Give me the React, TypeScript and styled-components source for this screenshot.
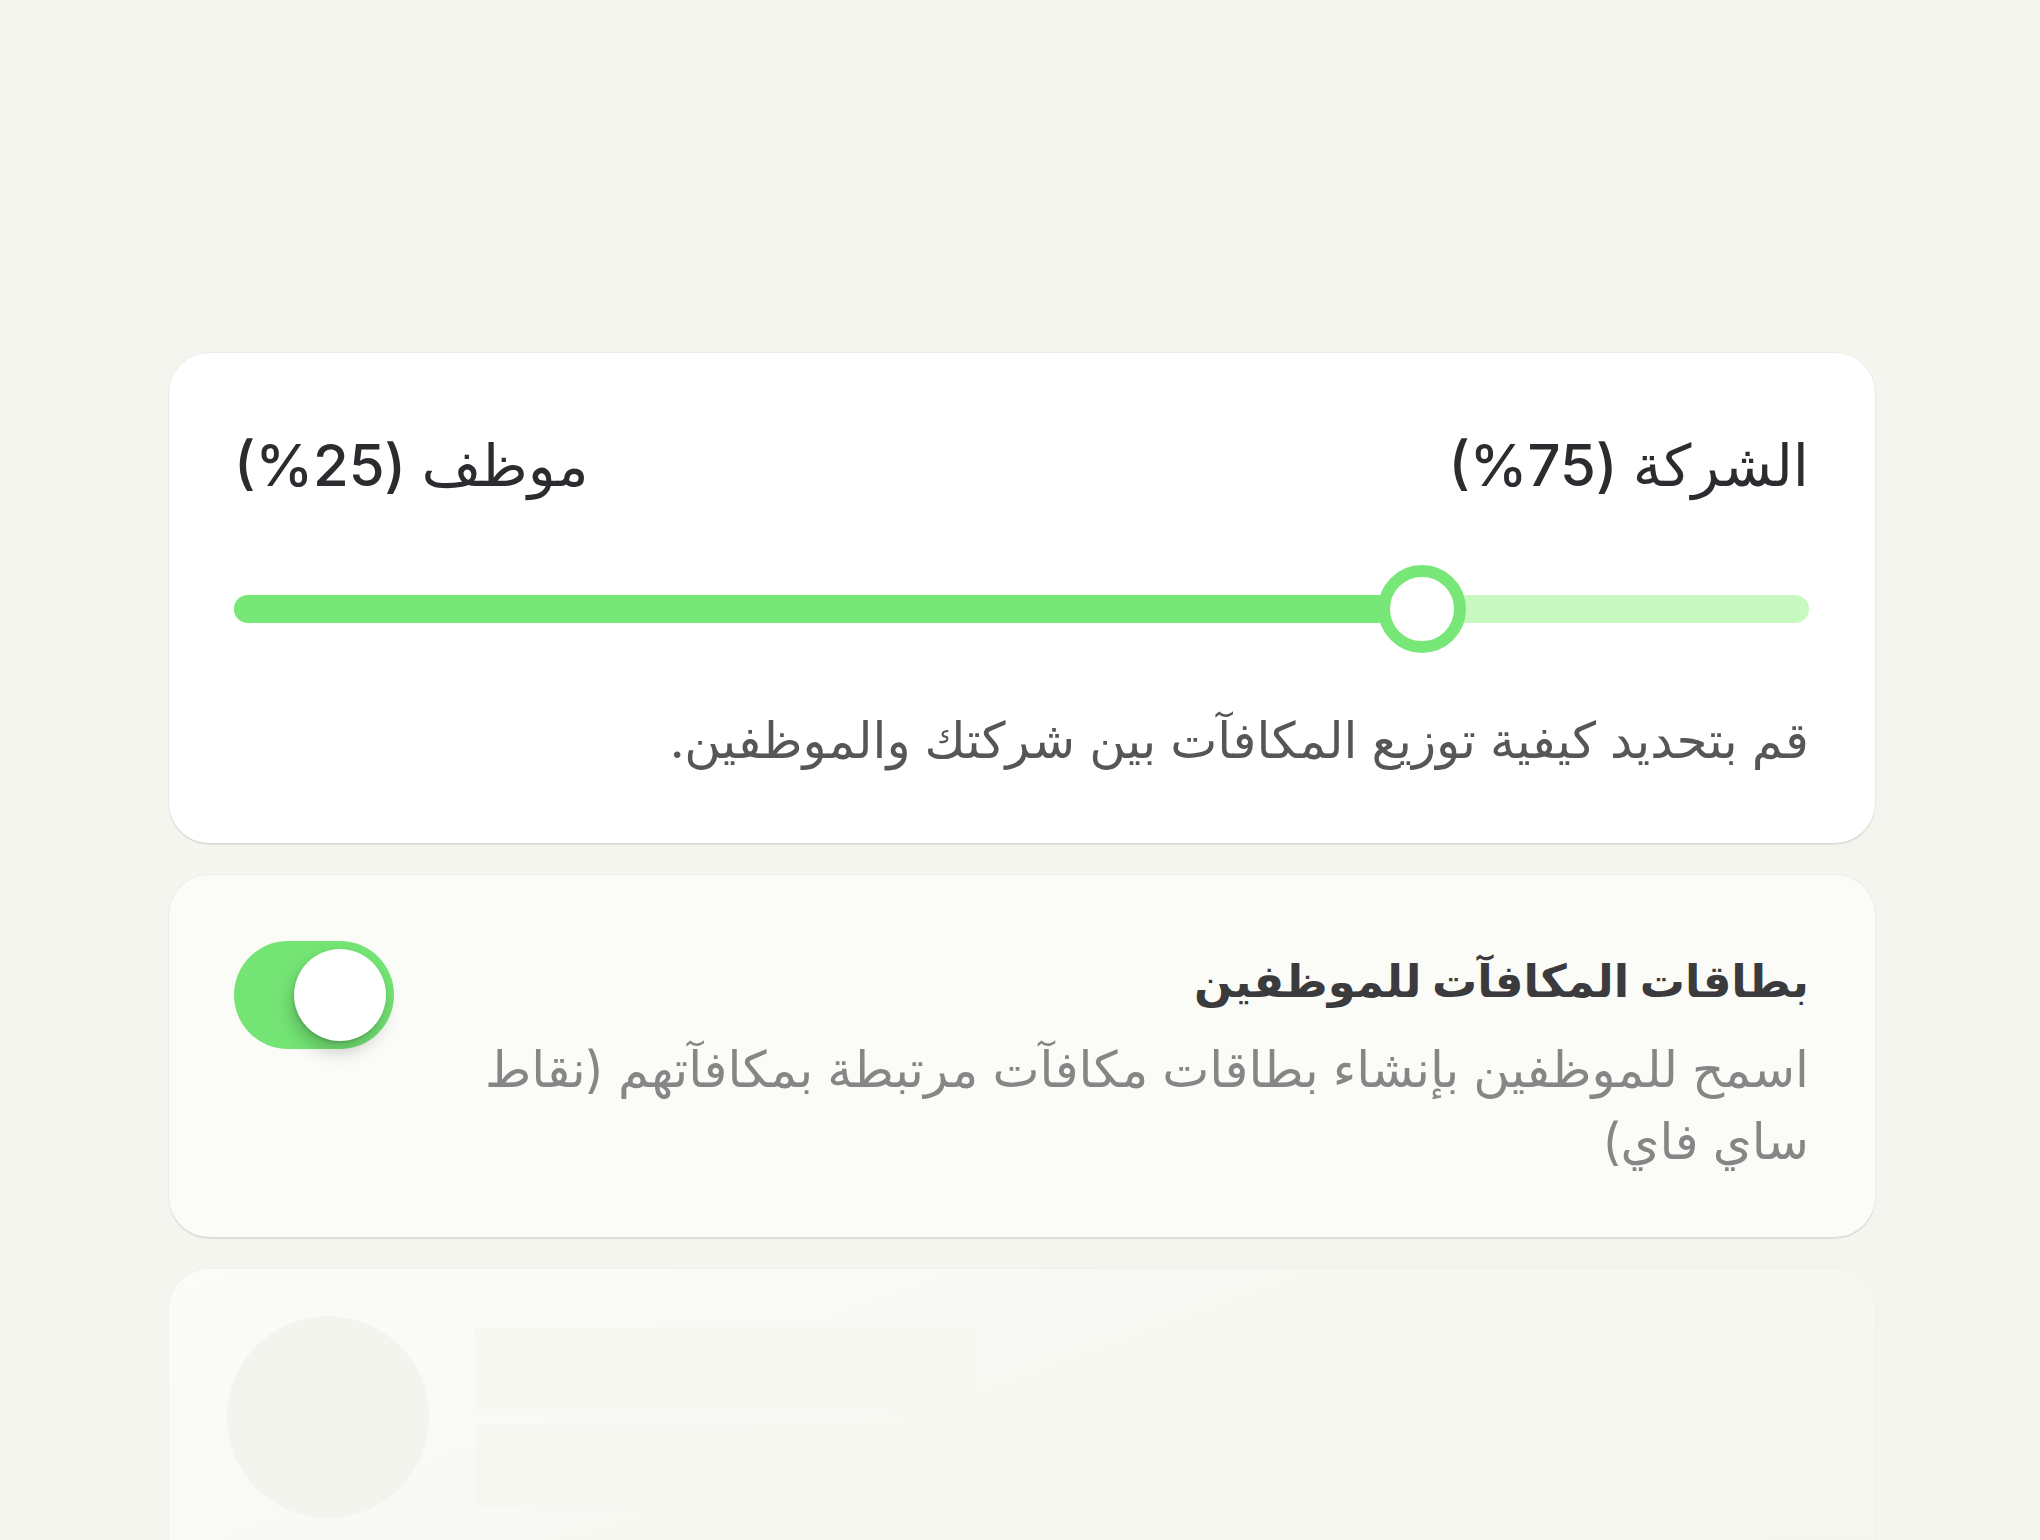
import React from "react";
import styled, { createGlobalStyle } from "styled-components";

const Global = createGlobalStyle`
  html, body { margin: 0; padding: 0; background: #f5f5ef; }
  body { font-family: Inter, "DejaVu Sans", sans-serif; }
`;

const Page = styled.div`
  box-sizing: border-box;
  padding: 353px 165px 0 169px;
  display: flex;
  flex-direction: column;
  gap: 32px;
  overflow: hidden;
  height: 1540px;
`;

const Card = styled.section<{ $tone?: "white" | "soft" }>`
  box-sizing: border-box;
  border-radius: 40px;
  background: ${(p) => (p.$tone === "soft" ? "#fbfbf8" : "#ffffff")};
  box-shadow: 0 2px 1px rgba(0, 0, 0, 0.08), 0 0 0 1px rgba(0, 0, 0, 0.03);
  direction: rtl;
`;

const SplitCard = styled(Card)`
  padding: 64px 66px 63px 65px;
  display: flex;
  flex-direction: column;
`;

const Header = styled.div`
  display: flex;
  justify-content: space-between;
  align-items: center;
  height: 96px;
`;

const Share = styled.span`
  font-size: 58px;
  font-weight: 500;
  color: #2b2b30;
  line-height: 96px;
`;

const SliderWrap = styled.div`
  direction: ltr;
  height: 88px;
  margin-top: 52px;
  display: flex;
  align-items: center;
`;

const Track = styled.div`
  position: relative;
  width: 100%;
  height: 28px;
  border-radius: 14px;
  background: #c8f9c0;
`;

const Fill = styled.div`
  position: absolute;
  left: 0;
  top: 0;
  bottom: 0;
  border-radius: 14px 0 0 14px;
  background: #77e878;
`;

const Thumb = styled.div`
  position: absolute;
  top: 50%;
  width: 88px;
  height: 88px;
  box-sizing: border-box;
  border-radius: 50%;
  border: 12px solid #77e878;
  background: #ffffff;
  transform: translate(-50%, -50%);
`;

const Desc = styled.p<{ $muted?: boolean }>`
  margin: 0;
  font-size: 50px;
  line-height: ${(p) => (p.$muted ? "72px" : "80px")};
  color: ${(p) => (p.$muted ? "#868686" : "#565656")};
`;

const SplitDesc = styled(Desc)`
  margin-top: 47px;
`;

const ToggleCard = styled(Card)`
  padding: 64px 66px 60px 65px;
  display: flex;
  align-items: flex-start;
  gap: 80px;
`;

const TextCol = styled.div`
  flex: 1;
  display: flex;
  flex-direction: column;
  gap: 10px;
`;

const ToggleTitle = styled.h3`
  margin: 0;
  font-size: 45px;
  font-weight: 700;
  line-height: 84px;
  color: #3b3b3d;
`;

const Toggle = styled.div<{ $on: boolean }>`
  flex: none;
  margin-top: 2px;
  width: 160px;
  height: 108px;
  border-radius: 54px;
  background: ${(p) => (p.$on ? "#74e574" : "#dddddd")};
  direction: ltr;
  display: flex;
  align-items: center;
  justify-content: ${(p) => (p.$on ? "flex-end" : "flex-start")};
  padding: 0 8px;
  box-sizing: border-box;
`;

const Knob = styled.div`
  width: 92px;
  height: 92px;
  border-radius: 50%;
  background: #ffffff;
  box-shadow: -2px 10px 18px rgba(0, 0, 0, 0.22), -1px 2px 3px rgba(0, 0, 0, 0.12);
`;

const GhostCard = styled.section`
  box-sizing: border-box;
  flex: none;
  height: 320px;
  border-radius: 40px;
  background: linear-gradient(160deg, #fbfcf9 0%, #f8f8f3 45%, #f6f6f0 100%);
  box-shadow: 0 0 0 1px rgba(0, 0, 0, 0.015);
  padding: 47px 58px;
  display: flex;
  align-items: flex-start;
  gap: 46px;
`;

const GhostCircle = styled.div`
  flex: none;
  width: 202px;
  height: 202px;
  border-radius: 50%;
  background: #f4f4ee;
`;

const GhostLines = styled.div`
  display: flex;
  flex-direction: column;
  gap: 16px;
  padding-top: 11px;
`;

const GhostBar = styled.div<{ $w: number }>`
  width: ${(p) => p.$w}px;
  height: 82px;
  background: #f7f7f2;
`;

export default function App() {
  const value = 75.4;
  return (
    <>
      <Global />
      <Page>
        <SplitCard>
          <Header>
            <Share>الشركة (75%)</Share>
            <Share>موظف (25%)</Share>
          </Header>
          <SliderWrap>
            <Track>
              <Fill style={{ width: `${value}%` }} />
              <Thumb style={{ left: `${value}%` }} />
            </Track>
          </SliderWrap>
          <SplitDesc>قم بتحديد كيفية توزيع المكافآت بين شركتك والموظفين.</SplitDesc>
        </SplitCard>

        <ToggleCard $tone="soft">
          <TextCol>
            <ToggleTitle>بطاقات المكافآت للموظفين</ToggleTitle>
            <Desc $muted>
              اسمح للموظفين بإنشاء بطاقات مكافآت مرتبطة بمكافآتهم (نقاط ساي فاي)
            </Desc>
          </TextCol>
          <Toggle $on>
            <Knob />
          </Toggle>
        </ToggleCard>

        <GhostCard>
          <GhostCircle />
          <GhostLines>
            <GhostBar $w={500} />
            <GhostBar $w={720} />
          </GhostLines>
        </GhostCard>
      </Page>
    </>
  );
}
